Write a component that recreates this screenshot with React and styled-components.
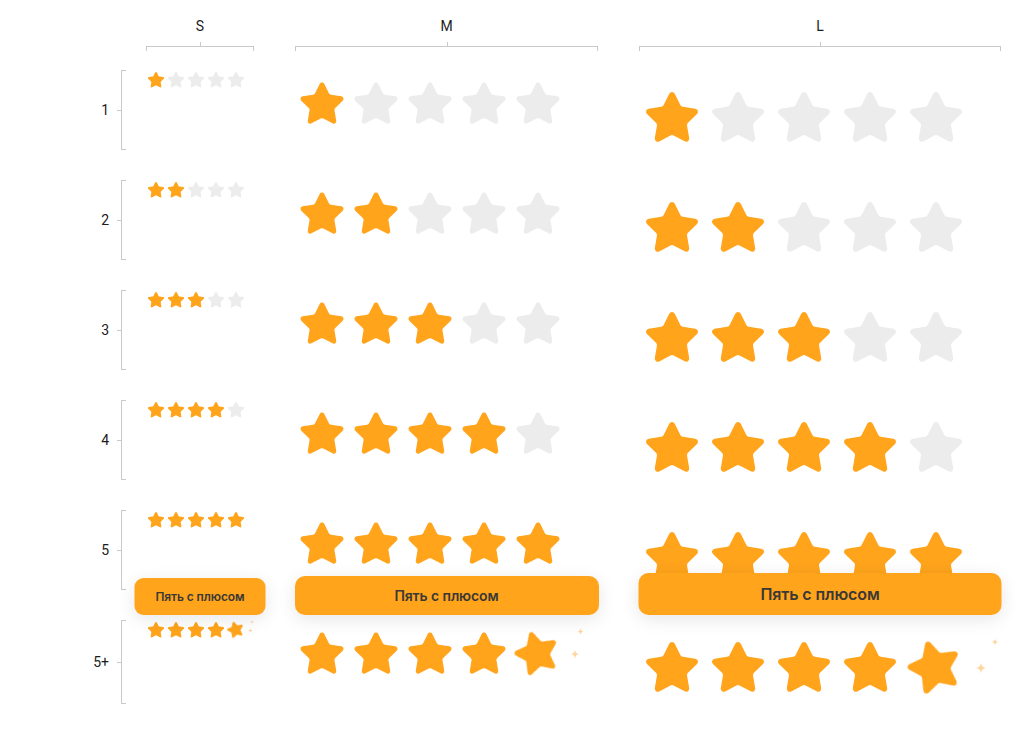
import React from "react"
import styled, { createGlobalStyle } from "styled-components"

const GlobalStyle = createGlobalStyle`
    body {
        margin: 0;
        background: #ffffff;
        font-family: Roboto, 'Noto Sans', 'Liberation Sans', sans-serif;
        color: #1c1c1c;
    }
`

const STAR_PATH = "M11.525 2.295a.53.53 0 0 1 .95 0l2.31 4.679a2.123 2.123 0 0 0 1.595 1.16l5.166.756a.53.53 0 0 1 .294.904l-3.736 3.638a2.123 2.123 0 0 0-.611 1.878l.882 5.14a.53.53 0 0 1-.771.56l-4.618-2.428a2.122 2.122 0 0 0-1.973 0L6.396 21.01a.53.53 0 0 1-.77-.56l.881-5.139a2.122 2.122 0 0 0-.611-1.879L2.16 9.795a.53.53 0 0 1 .294-.906l5.165-.755a2.122 2.122 0 0 0 1.597-1.16z"
const SPARK_PATH = "M12 1.5 Q13.2 10.8 22.5 12 Q13.2 13.2 12 22.5 Q10.8 13.2 1.5 12 Q10.8 10.8 12 1.5Z"

const ORANGE = '#ffa41b'
const GREY = '#ececec'
const LINE = '#c9c9c9'

const SIZES = {
    S: {
        width: 108, star: 18, gap: 2, padX: 1, padY: 1,
        btnW: 131, btnH: 37, btnFont: 12, btnRadius: 9,
        sparks: [{ x: 23, y: -1, s: 4 }, { x: 21, y: 7, s: 5 }],
    },
    M: {
        width: 303, star: 48, gap: 6, padX: 3, padY: 10,
        btnW: 304, btnH: 39, btnFont: 14, btnRadius: 10,
        sparks: [{ x: 63, y: -2, s: 7 }, { x: 56, y: 19, s: 10 }],
    },
    L: {
        width: 362, star: 58, gap: 8, padX: 4, padY: 19,
        btnW: 363, btnH: 42, btnFont: 16, btnRadius: 10,
        sparks: [{ x: 84, y: -1, s: 8 }, { x: 68, y: 23, s: 12 }],
    },
}

const ROWS = [
    { label: '1', count: 1 },
    { label: '2', count: 2 },
    { label: '3', count: 3 },
    { label: '4', count: 4 },
    { label: '5', count: 5, button: true },
    { label: '5+', count: 5, plus: true },
]

const Page = styled.div`
    padding-top: 18px;
    width: 1022px;
`

const HeaderRow = styled.div`
    display: flex;
    padding-left: 146px;
`

const HeaderCell = styled.div`
    display: flex;
    flex-direction: column;
    align-items: center;
    width: ${props => props.$width}px;
    margin-right: 41px;

    &:last-child {
        margin-right: 0;
    }
`

const HeaderLabel = styled.span`
    font-size: 14px;
    line-height: 16px;
`

const HeaderBracket = styled.div`
    position: relative;
    box-sizing: border-box;
    width: 100%;
    height: 5px;
    margin-top: 12px;
    border: 1px solid ${LINE};
    border-bottom: none;

    &::before {
        content: '';
        position: absolute;
        left: 50%;
        top: -5px;
        width: 1px;
        height: 4px;
        background: ${LINE};
    }
`

const Rows = styled.div`
    display: flex;
    flex-direction: column;
    gap: 30px;
    margin-top: 19px;
`

const Row = styled.div`
    display: flex;
    height: ${props => (props.$tall ? 84 : 80)}px;
`

const RowHead = styled.div`
    display: flex;
    align-items: center;
    width: 146px;
    flex-shrink: 0;
`

const RowLabel = styled.span`
    width: 109px;
    text-align: right;
    font-size: 14px;
    line-height: 16px;
`

const RowBracket = styled.div`
    position: relative;
    align-self: stretch;
    box-sizing: border-box;
    width: 5px;
    margin-left: 12px;
    border: 1px solid ${LINE};
    border-right: none;

    &::before {
        content: '';
        position: absolute;
        left: -5px;
        top: 50%;
        width: 4px;
        height: 1px;
        background: ${LINE};
    }
`

const Cell = styled.div`
    position: relative;
    box-sizing: border-box;
    width: ${props => props.$cfg.width}px;
    margin-right: 41px;
    padding: ${props => `${props.$cfg.padY}px 0 0 ${props.$cfg.padX}px`};
    flex-shrink: 0;

    &:last-child {
        margin-right: 0;
    }
`

const Stars = styled.div`
    display: flex;
    gap: ${props => props.$gap}px;
`

const StarSvg = styled.svg`
    display: block;
    width: ${props => props.$size}px;
    height: ${props => props.$size}px;
    flex-shrink: 0;
    fill: ${props => (props.$on ? ORANGE : GREY)};
    stroke: ${props => (props.$on ? ORANGE : GREY)};
    stroke-width: 1.5;
    stroke-linejoin: round;
`

const TiltWrap = styled.div`
    position: relative;
    width: ${props => props.$size}px;
    height: ${props => props.$size}px;
    flex-shrink: 0;

    & > svg:first-child {
        transform: rotate(-16deg) translate(-2%, -3%);
        filter: blur(0.5px);
    }
`

const Spark = styled.svg`
    position: absolute;
    left: ${props => props.$x}px;
    top: ${props => props.$y}px;
    width: ${props => props.$s}px;
    height: ${props => props.$s}px;
    fill: #ffd6a0;
`

const PlusButton = styled.button`
    position: absolute;
    left: 50%;
    bottom: -25px;
    transform: translateX(-50%);
    width: ${props => props.$cfg.btnW}px;
    height: ${props => props.$cfg.btnH}px;
    border: none;
    border-radius: ${props => props.$cfg.btnRadius}px;
    background: ${ORANGE};
    box-shadow: 0 4px 18px rgba(0, 0, 0, 0.10);
    color: #3b3835;
    font-family: Inter, Roboto, 'Noto Sans', sans-serif;
    font-size: ${props => props.$cfg.btnFont}px;
    font-weight: 600;
    letter-spacing: -0.1px;
    cursor: pointer;
    z-index: 2;
`

function Star({ size, on }) {
    return (
        <StarSvg viewBox="0 0 24 24" $size={size} $on={on}>
            <path d={STAR_PATH} />
        </StarSvg>
    )
}

function StarCell({ name, count, plus, button }) {
    const cfg = SIZES[name]
    const stars = [0, 1, 2, 3, 4]
    return (
        <Cell $cfg={cfg}>
            <Stars $gap={cfg.gap}>
                {stars.map(i => {
                    if (plus && i === 4) {
                        return (
                            <TiltWrap key={i} $size={cfg.star}>
                                <Star size={cfg.star} on />
                                {cfg.sparks.map((sp, j) => (
                                    <Spark key={j} viewBox="0 0 24 24" $x={sp.x} $y={sp.y} $s={sp.s}>
                                        <path d={SPARK_PATH} />
                                    </Spark>
                                ))}
                            </TiltWrap>
                        )
                    }
                    return <Star key={i} size={cfg.star} on={i < count} />
                })}
            </Stars>
            {button && <PlusButton $cfg={cfg}>Пять с плюсом</PlusButton>}
        </Cell>
    )
}

export default function App() {
    const names = ['S', 'M', 'L']
    return (
        <>
            <GlobalStyle />
            <Page>
                <HeaderRow>
                    {names.map(n => (
                        <HeaderCell key={n} $width={SIZES[n].width}>
                            <HeaderLabel>{n}</HeaderLabel>
                            <HeaderBracket />
                        </HeaderCell>
                    ))}
                </HeaderRow>
                <Rows>
                    {ROWS.map(row => (
                        <Row key={row.label} $tall={row.plus}>
                            <RowHead>
                                <RowLabel>{row.label}</RowLabel>
                                <RowBracket />
                            </RowHead>
                            {names.map(n => (
                                <StarCell
                                    key={n}
                                    name={n}
                                    count={row.count}
                                    plus={row.plus}
                                    button={row.button}
                                />
                            ))}
                        </Row>
                    ))}
                </Rows>
            </Page>
        </>
    )
}
